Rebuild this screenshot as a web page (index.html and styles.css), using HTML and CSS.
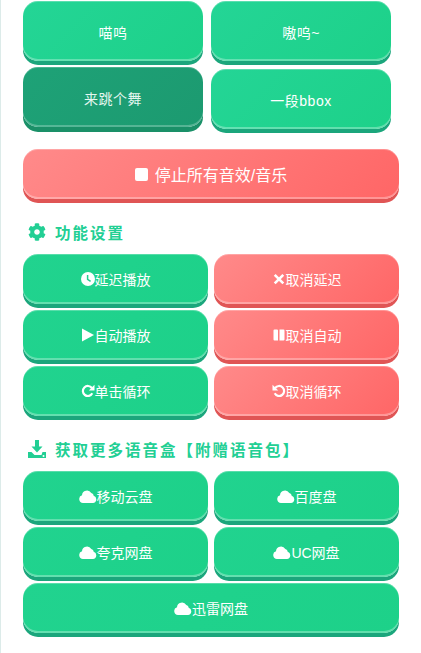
FILE: index.html
```html
<!DOCTYPE html>
<html lang="zh-CN">
<head>
    <meta charset="UTF-8">
    <title>语音盒</title>
    <link rel="stylesheet" href="styles.css">
</head>
<body>
    <div class="page">
        <!-- 音效按钮 -->
        <div class="soundGrid">
            <button class="btn green fancy">喵呜</button>
            <button class="btn green fancy">嗷呜~</button>
            <button class="btn green fancy pressed">来跳个舞</button>
            <button class="btn green fancy">一段bbox</button>
        </div>

        <button class="btn red stopBtn">
            <svg class="icon stopIcon" viewBox="0 0 13 13"><rect width="13" height="13" rx="2"/></svg>
            停止所有音效/音乐
        </button>

        <!-- 功能设置 -->
        <h2 class="title">
            <svg class="icon titleIcon" viewBox="0 0 512 512"><path d="M487.4 315.7l-42.6-24.6c4.3-23.2 4.3-47 0-70.2l42.6-24.6c4.9-2.8 7.1-8.6 5.5-14-11.1-35.6-30-67.8-54.7-94.6-3.8-4.1-10-5.1-14.8-2.3L380.8 110c-17.9-15.4-38.5-27.3-60.8-35.1V25.8c0-5.6-3.9-10.5-9.4-11.7-36.7-8.2-74.3-7.8-109.2 0-5.5 1.2-9.4 6.1-9.4 11.7V75c-22.2 7.9-42.8 19.8-60.8 35.1L88.7 85.5c-4.9-2.8-11-1.9-14.8 2.3-24.7 26.7-43.6 58.9-54.7 94.6-1.7 5.4.6 11.2 5.5 14L67.3 221c-4.3 23.2-4.3 47 0 70.2l-42.6 24.6c-4.9 2.8-7.1 8.6-5.5 14 11.1 35.6 30 67.8 54.7 94.6 3.8 4.1 10 5.1 14.8 2.3l42.6-24.6c17.9 15.4 38.5 27.3 60.8 35.1v49.2c0 5.6 3.9 10.5 9.4 11.7 36.7 8.2 74.3 7.8 109.2 0 5.5-1.2 9.4-6.1 9.4-11.7v-49.2c22.2-7.9 42.8-19.8 60.8-35.1l42.6 24.6c4.9 2.8 11 1.9 14.8-2.3 24.7-26.7 43.6-58.9 54.7-94.6 1.5-5.5-.7-11.3-5.6-14.1zM256 336c-44.1 0-80-35.9-80-80s35.9-80 80-80 80 35.9 80 80-35.9 80-80 80z"/></svg>
            功能设置
        </h2>
        <div class="btnGrid">
            <button class="btn green">
                <svg class="icon" viewBox="0 0 14 14"><circle cx="7" cy="7" r="7"/><path class="hands" d="M6.6 3v4.4l3 2"/></svg>延迟播放
            </button>
            <button class="btn red">
                <svg class="icon" viewBox="0 0 11 14"><path class="cross" d="M1.2 2.8l8.6 8.6M9.8 2.8l-8.6 8.6"/></svg>取消延迟
            </button>
            <button class="btn green">
                <svg class="icon" viewBox="0 0 12 14"><path d="M0 .5l12 6.5-12 6.5z"/></svg>自动播放
            </button>
            <button class="btn red">
                <svg class="icon" viewBox="0 0 11 14"><path d="M0 2.5a1 1 0 0 1 1-1h2.500a1 1 0 0 1 1 1v10h-3.500a1 1 0 0 1-1-1zM6 1.500h4a1 1 0 0 1 1 1v9a1 1 0 0 1-1 1h-4z"/></svg>取消自动
            </button>
            <button class="btn green">
                <svg class="icon" viewBox="0 0 14 14"><path class="arc" d="M11.3 9.300a5 5 0 1 1-.4-5.300"/><path d="M13.500 .8v5.700h-5.700z"/></svg>单击循环
            </button>
            <button class="btn red">
                <svg class="icon mirror" viewBox="0 0 14 14"><path class="arc" d="M11.300 9.300a5 5 0 1 1-.4-5.300"/><path d="M13.500 .8v5.700h-5.700z"/></svg>取消循环
            </button>
        </div>

        <!-- 语音包下载 -->
        <h2 class="title">
            <svg class="icon titleIcon" viewBox="0 0 18 18"><path d="M7 0h4v6.500h3.500l-5.500 6-5.500-6h3.500z"/><path d="M0 12h3.500l3 3h7l1-3h3.500v6h-18z"/><circle class="dot" cx="15.500" cy="16" r="1"/></svg>
            获取更多语音盒【附赠语音包】
        </h2>
        <div class="btnGrid">
            <button class="btn green">
                <svg class="icon cloud" viewBox="0.500 0 17 13"><path d="M4 13a4 4 0 0 1-1-7.800 5 5 0 0 1 9.300-2.200 3 3 0 0 1 2.400 2.800 3.700 3.700 0 0 1-.7 7.200z"/></svg>移动云盘
            </button>
            <button class="btn green">
                <svg class="icon cloud" viewBox="0.500 0 17 13"><path d="M4 13a4 4 0 0 1-1-7.800 5 5 0 0 1 9.300-2.200 3 3 0 0 1 2.400 2.800 3.700 3.700 0 0 1-.7 7.200z"/></svg>百度盘
            </button>
            <button class="btn green">
                <svg class="icon cloud" viewBox="0.500 0 17 13"><path d="M4 13a4 4 0 0 1-1-7.800 5 5 0 0 1 9.300-2.200 3 3 0 0 1 2.400 2.800 3.700 3.700 0 0 1-.7 7.200z"/></svg>夸克网盘
            </button>
            <button class="btn green">
                <svg class="icon cloud" viewBox="0.500 0 17 13"><path d="M4 13a4 4 0 0 1-1-7.800 5 5 0 0 1 9.300-2.200 3 3 0 0 1 2.400 2.800 3.700 3.700 0 0 1-.7 7.200z"/></svg>UC网盘
            </button>
            <button class="btn green wide">
                <svg class="icon cloud" viewBox="0.500 0 17 13"><path d="M4 13a4 4 0 0 1-1-7.800 5 5 0 0 1 9.300-2.200 3 3 0 0 1 2.400 2.800 3.700 3.700 0 0 1-.7 7.200z"/></svg>迅雷网盘
            </button>
        </div>
    </div>
</body>
</html>
```

FILE: styles.css
```css
* {
    margin: 0;
    padding: 0;
    box-sizing: border-box;
}
body {
    background-color: #fff;
    font-family: "Liberation Sans", "Noto Sans CJK SC", sans-serif;
}
.page {
    width: 400px;
    height: 653px;
    padding: 1px 0 0 22px;
    border-left: 1px solid #dcebe9;
}
.icon {
    flex: none;
    width: 14px;
    height: 14px;
    fill: #fff;
}
.btn {
    display: flex;
    align-items: center;
    justify-content: center;
    height: 50px;
    border: none;
    border-radius: 15px;
    color: #fff;
    font-family: inherit;
    font-size: 14px;
}
.green {
    background: linear-gradient(135deg, #24d596, #1dd189);
    box-shadow: 0 4px 0 #1ba67c, inset 0 -2px 0 rgba(255, 255, 255, .3), inset 0 1px 0 rgba(255, 255, 255, .25);
}
.btnGrid .green {
    background: linear-gradient(135deg, #21d38f, #1dd189);
}
.red {
    background: linear-gradient(135deg, #ff8a8a, #ff6666);
    box-shadow: 0 4px 0 #e05555, inset 0 -2px 0 rgba(255, 255, 255, .3), inset 0 1px 0 rgba(255, 255, 255, .25);
}
.soundGrid {
    display: grid;
    grid-template-columns: 180px 180px;
    gap: 8px;
}
.soundGrid .btn {
    height: 60px;
    padding-top: 1px;
}
.soundGrid .pressed {
    background: linear-gradient(135deg, #1ea277, #1c9a70);
    box-shadow: 0 5px 0 #1a9068, inset 0 -2px 0 rgba(255, 255, 255, .25), inset 0 1px 0 rgba(255, 255, 255, .2);
    color: #e4f6ef;
    transform: translateY(-2px);
}
.fancy {
    letter-spacing: .5px;
}
.stopBtn {
    width: 376px;
    margin-top: 20px;
    font-size: 16px;
}
.stopIcon {
    width: 13px;
    height: 13px;
    margin-right: 7px;
}
.title {
    display: flex;
    align-items: center;
    height: 55px;
    padding: 11px 0 0 5px;
    color: #22cf94;
    font-size: 15.500px;
    font-weight: bold;
    letter-spacing: 2px;
}
.titleIcon {
    width: 18px;
    height: 18px;
    margin-right: 9px;
    fill: #22cf94;
}
.dot {
    fill: #fff;
}
.btnGrid {
    display: grid;
    grid-template-columns: 185px 185px;
    gap: 6px;
}
.wide {
    grid-column: 1 / -1;
}
.cloud {
    width: 18px;
    height: 13px;
}
.mirror {
    transform: scaleX(-1);
}
.hands {
    fill: none;
    stroke: #22d08f;
    stroke-width: 1.500;
}
.cross {
    fill: none;
    stroke: #fff;
    stroke-width: 2.600;
}
.arc {
    fill: none;
    stroke: #fff;
    stroke-width: 2.200;
}
```
